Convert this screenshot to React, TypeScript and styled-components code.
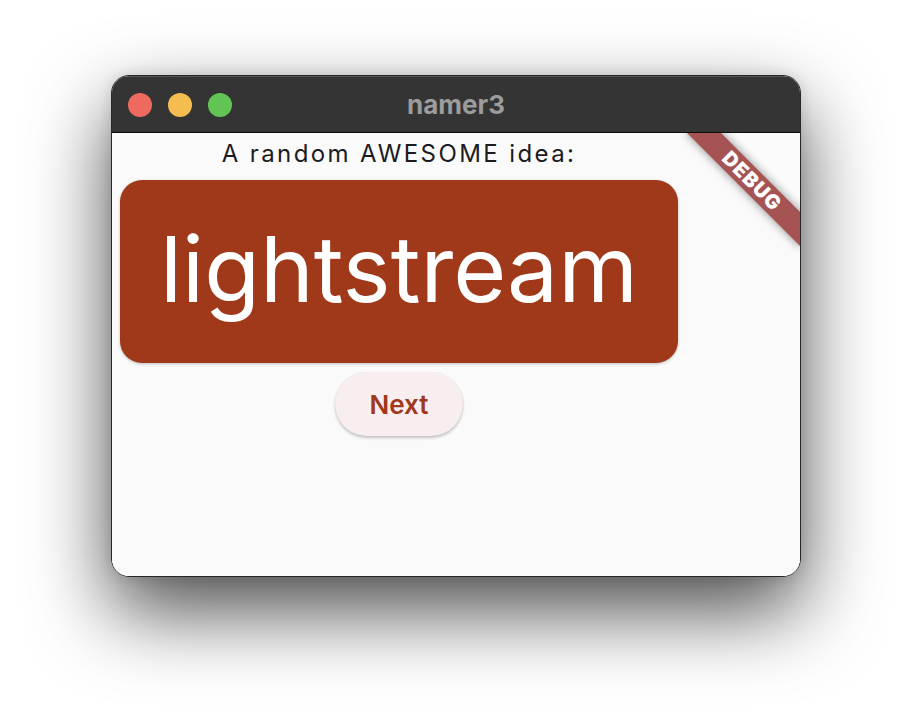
import React from "react";
import styled, { createGlobalStyle } from "styled-components";

const GlobalStyle = createGlobalStyle`
  html, body { margin: 0; padding: 0; background: #ffffff; }
  body { font-family: Inter, "Noto Sans", sans-serif; }
`;

const Stage = styled.div`
  box-sizing: border-box;
  width: 912px;
  height: 724px;
  padding: 75px 0 0 111px;
  overflow: hidden;
  background: #ffffff;
`;

const Window = styled.div`
  box-sizing: border-box;
  width: 690px;
  height: 502px;
  border: 1px solid rgba(0, 0, 0, 0.85);
  border-radius: 18px;
  overflow: hidden;
  display: flex;
  flex-direction: column;
  box-shadow: 0 34px 80px rgba(0, 0, 0, 0.7), 0 0 14px rgba(0, 0, 0, 0.12);
`;

const TitleBar = styled.div`
  height: 56px;
  flex: 0 0 56px;
  background: #343434;
  border-bottom: 1px solid #0c0c0c;
  box-shadow: inset 0 1px 0 rgba(255, 255, 255, 0.16);
  display: grid;
  grid-template-columns: 1fr auto 1fr;
  align-items: center;
`;

const Lights = styled.div`
  display: flex;
  gap: 16px;
  padding-left: 16px;
  padding-top: 1px;
`;

const Light = styled.span<{ $color: string }>`
  width: 24px;
  height: 24px;
  border-radius: 50%;
  background: ${(p) => p.$color};
`;

const Title = styled.div`
  font-family: Inter, "Liberation Sans", sans-serif;
  font-weight: 700;
  font-size: 26px;
  color: #9c9c9c;
  line-height: 1;
  padding-top: 1px;
`;

const Content = styled.div`
  position: relative;
  flex: 1;
  background: #fafafa;
  overflow: hidden;
`;

const Column = styled.div`
  display: inline-flex;
  flex-direction: column;
  align-items: center;
`;

const Caption = styled.div`
  margin-top: 7px;
  font-family: Inter, sans-serif;
  font-size: 24px;
  line-height: 28px;
  letter-spacing: 2.4px;
  color: #1c1b1f;
`;

const Card = styled.div`
  margin: 12px 8px 8px;
  width: 558px;
  height: 183px;
  box-sizing: border-box;
  border-radius: 22px;
  background: #a0381a;
  box-shadow: 0 1px 3px rgba(0, 0, 0, 0.25);
  display: flex;
  align-items: center;
  justify-content: center;
`;

const Word = styled.div`
  font-family: Inter, sans-serif;
  font-size: 91px;
  line-height: 1;
  color: #ffffff;
  padding-bottom: 4px;
`;

const NextButton = styled.button`
  margin-top: 1px;
  width: 128px;
  height: 64px;
  border: none;
  border-radius: 32px;
  background: #f8eef0;
  color: #a0381a;
  font-family: Inter, sans-serif;
  font-weight: 600;
  font-size: 26px;
  box-shadow: 0 2px 3px rgba(0, 0, 0, 0.22), 0 0 1px rgba(0, 0, 0, 0.1);
  cursor: pointer;
  padding: 0;
`;

const Banner = styled.div`
  position: absolute;
  left: 560px;
  top: 36px;
  width: 160px;
  height: 24px;
  transform: rotate(45deg);
  background: #a65353;
  box-shadow: 0 0 10px rgba(0, 0, 0, 0.45);
  color: #ffffff;
  font-family: Inter, "Liberation Sans", sans-serif;
  font-weight: 900;
  font-size: 20px;
  line-height: 24px;
  letter-spacing: 1px;
  text-align: center;
`;

export default function App() {
  return (
    <>
      <GlobalStyle />
      <Stage>
        <Window>
          <TitleBar>
            <Lights>
              <Light $color="#ee6a5f" />
              <Light $color="#f5bd4f" />
              <Light $color="#61c454" />
            </Lights>
            <Title>namer3</Title>
            <div />
          </TitleBar>
          <Content>
            <Column>
              <Caption>A random AWESOME idea:</Caption>
              <Card>
                <Word>lightstream</Word>
              </Card>
              <NextButton>Next</NextButton>
            </Column>
            <Banner>DEBUG</Banner>
          </Content>
        </Window>
      </Stage>
    </>
  );
}
